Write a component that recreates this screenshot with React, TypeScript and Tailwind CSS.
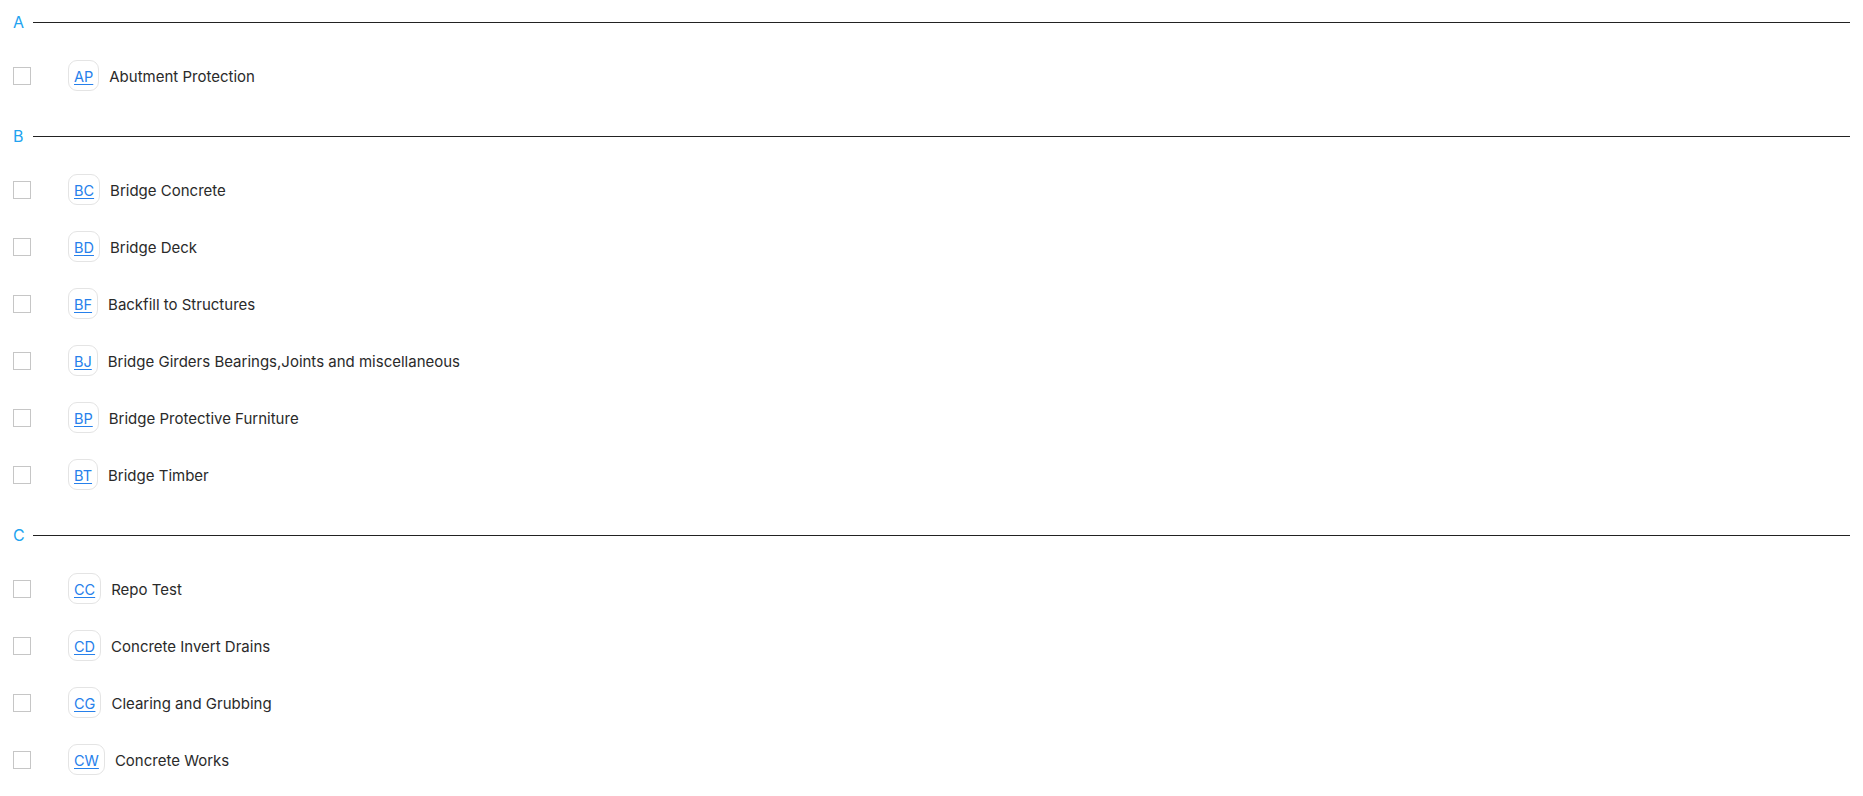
import React from 'react';

type Item = { code: string; name: string };
type Group = { letter: string; items: Item[] };

const groups: Group[] = [
  { letter: 'A', items: [{ code: 'AP', name: 'Abutment Protection' }] },
  {
    letter: 'B',
    items: [
      { code: 'BC', name: 'Bridge Concrete' },
      { code: 'BD', name: 'Bridge Deck' },
      { code: 'BF', name: 'Backfill to Structures' },
      { code: 'BJ', name: 'Bridge Girders Bearings,Joints and miscellaneous' },
      { code: 'BP', name: 'Bridge Protective Furniture' },
      { code: 'BT', name: 'Bridge Timber' },
    ],
  },
  {
    letter: 'C',
    items: [
      { code: 'CC', name: 'Repo Test' },
      { code: 'CD', name: 'Concrete Invert Drains' },
      { code: 'CG', name: 'Clearing and Grubbing' },
      { code: 'CW', name: 'Concrete Works' },
    ],
  },
];

function Row({ item }: { item: Item }) {
  return (
    <div className="flex items-center h-[57px]">
      <span className="w-[18px] h-[18px] border border-[#c6c6c6] bg-white shrink-0" />
      <span className="ml-[37px] h-[31px] px-[5px] flex items-center rounded-[9px] border border-[#e4e4e4] shrink-0">
        <a href="#" className="pt-[2px] text-[#2680eb] underline underline-offset-2 text-[14.5px] leading-5">
          {item.code}
        </a>
      </span>
      <span className="ml-[10px] pt-[2px] text-[15px] leading-5 text-[#2a2a2a]">{item.name}</span>
    </div>
  );
}

export default function App() {
  return (
    <div className="bg-white min-h-screen pl-[13px] pr-[13px] pt-[10px] font-['Inter','Liberation_Sans',sans-serif]">
      {groups.map((g) => (
        <section key={g.letter} className="mb-[20px]">
          <div className="flex items-center h-6">
            <span className="text-[16px] text-[#22a3f0] w-[12px]">{g.letter}</span>
            <span className="flex-1 h-px bg-[#222] ml-[8px]" />
          </div>
          <div className="mt-[13px]">
            {g.items.map((it) => (
              <Row key={it.code} item={it} />
            ))}
          </div>
        </section>
      ))}
    </div>
  );
}
